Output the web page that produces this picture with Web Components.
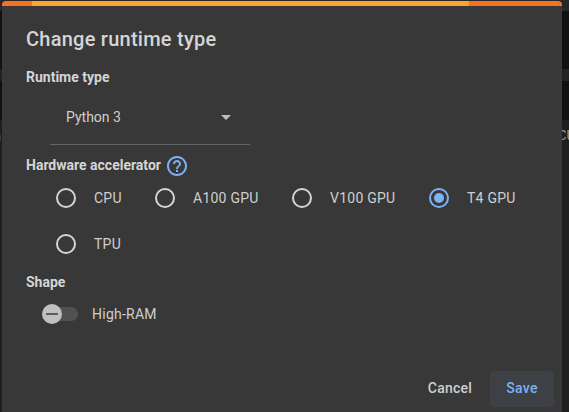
<!DOCTYPE html>
<html lang="en">
<head>
<meta charset="utf-8">
<title>Change runtime type</title>
<style>
html,body{margin:0;width:569px;height:412px;overflow:hidden;background:#1f1f1f}
body{font:14px/20px Roboto,sans-serif;color:#d5d5d5}
</style>
</head>
<body>
<runtime-page></runtime-page>
<script>
const define = (name, html) => customElements.define(name, class extends HTMLElement {
  connectedCallback() {
    if (this.shadowRoot) return;
    const t = document.createElement('template');
    t.innerHTML = html;
    this.attachShadow({mode: 'open'}).append(t.content.cloneNode(true));
  }
});

define('notebook-backdrop', `<style>
:host{display:flex;flex-direction:column;position:absolute;inset:0;overflow:hidden;background:#1f1f1f}
.top{height:11px;background:#272727}.cell{background:#111}
.a{height:58px}.gap{height:12px;background:#222}.b{height:39px}
.out{display:flex;justify-content:space-between;align-items:center;height:32px;font:14px/32px "Liberation Mono",monospace;color:#999;margin-right:-6px}
.out i{width:1px;height:6px;margin-top:4px;background:#3a3a3a}
</style><div class="top"></div><div class="cell a"></div><div class="gap"></div><div class="cell b"></div><div class="out"><i></i><span>CU</span></div>`);

define('load-bar', `<style>
:host{display:flex;height:5px}
i{background:#f57123}.l{width:30px}.m{width:437px;background:#ffa430}.r{flex:1}
</style><i class="l"></i><i class="m"></i><i class="r"></i>`);

define('section-label', `<style>
:host{display:flex;align-items:center;height:20px;font-size:14px;line-height:20px;font-weight:700;color:#d5d5d5}
</style><slot></slot>`);

define('help-icon', `<style>
:host{display:block;width:20px;height:20px;margin:2px 0 0 6px}svg{display:block}
</style><svg width="20" height="20" viewBox="2 2 20 20" fill="#7cb1f5"><path d="M11 18h2v-2h-2v2zm1-16C6.48 2 2 6.48 2 12s4.480 10 10 10 10-4.480 10-10S17.520 2 12 2zm0 18c-4.410 0-8-3.590-8-8s3.590-8 8-8 8 3.590 8 8-3.590 8-8 8zm0-14c-2.210 0-4 1.790-4 4h2c0-1.100.9-2 2-2s2 .9 2 2c0 2-3 1.750-3 5h2c0-2.250 3-2.500 3-5 0-2.210-1.790-4-4-4z"/></svg>`);

define('select-box', `<style>
:host{display:flex;align-items:center;justify-content:space-between;box-sizing:border-box;width:200px;height:55px;padding:0 19px 0 16px;border-bottom:1px solid #666;line-height:20px;color:#cfcfcf}
svg{display:block}
</style><span><slot></slot></span><svg width="10" height="5"><path d="M0 0h10L5 5z" fill="#bdbdbd"/></svg>`);

define('radio-option', `<style>
:host{display:flex;align-items:center;height:20px;color:#cfcfcf}
.c{display:grid;place-items:center;box-sizing:border-box;width:20px;height:20px;border:2px solid #d5d5d5;border-radius:50%;margin-right:18px}
:host([checked]) .c{border-color:#7cb1f5}
:host([checked]) .c::after{content:"";width:10px;height:10px;border-radius:50%;background:#7cb1f5}
span{letter-spacing:.25px;white-space:nowrap}
</style><div class="c"></div><span><slot></slot></span>`);

define('toggle-switch', `<style>
:host{display:flex;align-items:center;height:20px;color:#cfcfcf}
.t{display:flex;align-items:center;width:36px;height:14px;border-radius:7px;background:#515151;margin-right:14px}
.k{display:grid;place-items:center;width:20px;height:20px;flex:none;border-radius:50%;background:#c0c0c0}
.k::after{content:"";width:12px;height:2px;background:#5c5c5c}
span{letter-spacing:.25px}
</style><div class="t"><div class="k"></div></div><span><slot></slot></span>`);

define('text-button', `<style>
:host{display:grid;place-items:center;box-sizing:border-box;height:36px;padding-bottom:2px;border-radius:4px;font-weight:500;color:#cfcfcf;width:76px}
:host([primary]){width:64px;background:#3d4044;color:#7cb1f5}
span{letter-spacing:.25px}
</style><span><slot></slot></span>`);

define('runtime-dialog', `<style>
:host{display:flex;flex-direction:column;position:absolute;left:2px;top:1px;width:560px;height:411px;overflow:hidden;border-radius:4px 4px 0 0;background:#383838}
load-bar,h1,section-label,select-box,.radios,toggle-switch,footer{flex:none}
h1{margin:20px 24px 0;font-size:20px;line-height:26px;font-weight:500;letter-spacing:.25px;color:#d5d5d5}
.type{margin:15px 24px 0}
select-box{margin:3px 0 0 48px}
.hw{margin:10px 24px 0}
.radios{display:grid;grid-template-columns:99px 137px 137px 120px;row-gap:26px;margin:13px 0 0 54px}
.shape{margin:18px 24px 0}
toggle-switch{margin:12px 0 0 40px}
footer{display:flex;justify-content:flex-end;gap:2px;margin:47px 8px 0 0}
</style><load-bar></load-bar><h1>Change runtime type</h1>
<section-label class="type">Runtime type</section-label><select-box>Python 3</select-box>
<section-label class="hw">Hardware accelerator<help-icon></help-icon></section-label>
<div class="radios"><radio-option>CPU</radio-option><radio-option>A100 GPU</radio-option><radio-option>V100 GPU</radio-option><radio-option checked>T4 GPU</radio-option><radio-option>TPU</radio-option></div>
<section-label class="shape">Shape</section-label><toggle-switch>High-RAM</toggle-switch>
<footer><text-button>Cancel</text-button><text-button primary>Save</text-button></footer>`);

define('runtime-page', `<style>:host{display:block;position:relative;width:569px;height:412px;overflow:hidden}</style><notebook-backdrop></notebook-backdrop><runtime-dialog></runtime-dialog>`);
</script>
</body>
</html>
